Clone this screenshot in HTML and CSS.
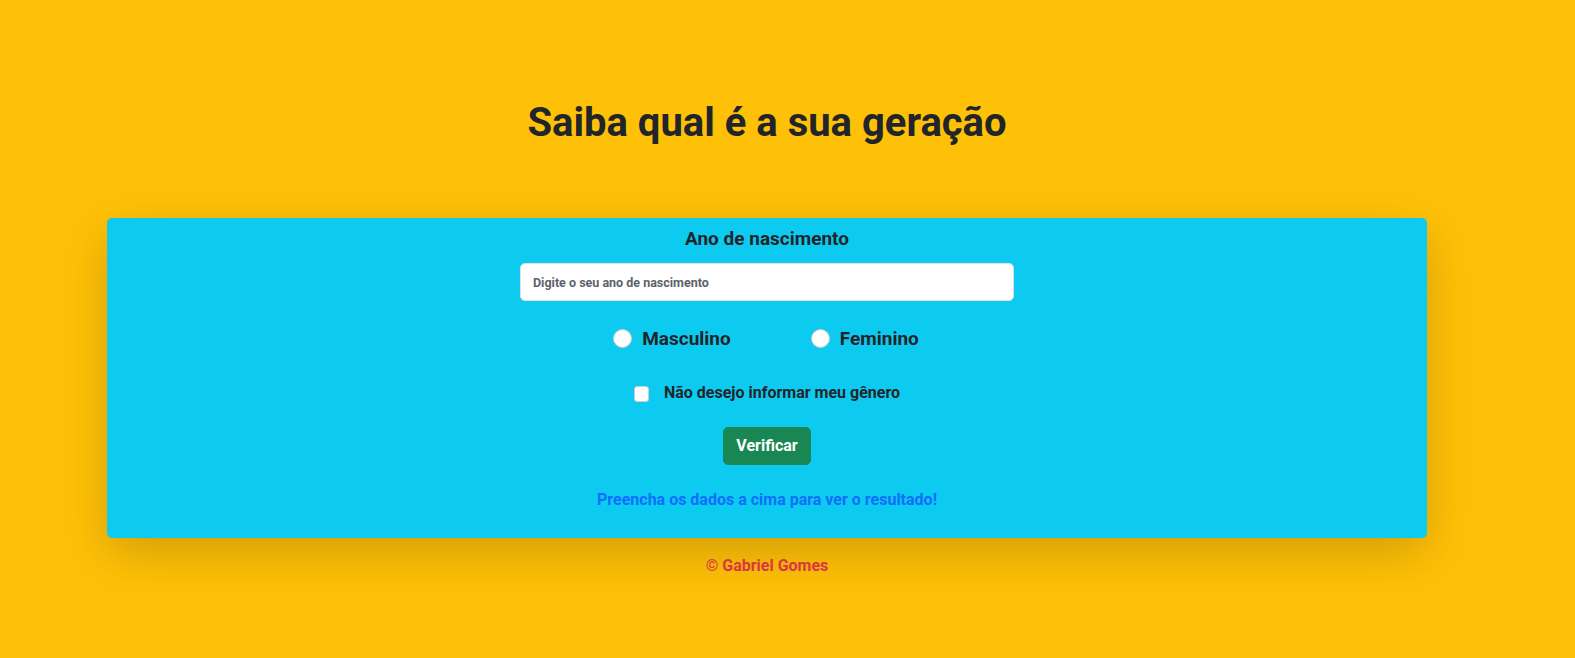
FILE: index.html
```html
<!DOCTYPE html>
<html lang="pt-br">
<head>
<meta charset="utf-8">
<title>Saiba qual é a sua geração</title>
<link rel="stylesheet" href="styles.css">
</head>
<body>
<div class="page">
  <h1 class="title">Saiba qual é a sua geração</h1>
  <main class="card">
    <label class="year-label" for="ano">Ano de nascimento</label>
    <input class="year-input" id="ano" type="text" placeholder="Digite o seu ano de nascimento">
    <div class="gender-row">
      <label class="radio-item"><span class="radio"></span><span>Masculino</span></label>
      <label class="radio-item"><span class="radio"></span><span>Feminino</span></label>
    </div>
    <div class="check-row">
      <span class="checkbox"></span>
      <span class="check-text">Não desejo informar meu gênero</span>
    </div>
    <button class="btn-verify" type="button">Verificar</button>
    <p class="result">Preencha os dados a cima para ver o resultado!</p>
  </main>
  <footer class="footer">© Gabriel Gomes</footer>
</div>
</body>
</html>
```

FILE: styles.css
```css
* { box-sizing: border-box; }
html, body { margin: 0; padding: 0; }
body {
  background: #ffc107;
  color: #212529;
  font-family: Roboto, "Liberation Sans", sans-serif;
  font-weight: 700;
  height: 658px;
}
.page {
  width: 1534px;
  display: flex;
  flex-direction: column;
  align-items: center;
}
.title {
  margin: 99px 0 0;
  font-size: 40px;
  line-height: 48px;
  font-weight: 700;
}
.card {
  margin-top: 71px;
  width: 1320px;
  background: #0dcaf0;
  border-radius: 5px;
  box-shadow: 0 16px 48px rgba(0,0,0,.175);
  display: flex;
  flex-direction: column;
  align-items: center;
  padding: 9px 0 26px;
}
.year-label {
  font-size: 19px;
  line-height: 24px;
}
.year-input {
  margin-top: 12px;
  width: 494px;
  height: 38px;
  border: 1px solid #dee2e6;
  border-radius: 5px;
  padding: 6px 12px;
  font-family: inherit;
  font-weight: 700;
  font-size: 12.5px;
  background: #fff;
}
.year-input::placeholder { color: #5c636a; opacity: 1; }
.gender-row {
  margin-top: 22px;
  height: 30px;
  display: flex;
  align-items: center;
  gap: 80px;
  padding-right: 2px;
}
.radio-item {
  display: flex;
  align-items: center;
  gap: 10px;
  font-size: 19px;
}
.radio {
  width: 19px;
  height: 19px;
  border-radius: 50%;
  background: #fff;
  border: 1px solid #c8cdd2;
}
.check-row {
  margin-top: 27px;
  display: flex;
  align-items: center;
  gap: 15px;
  font-size: 16px;
  height: 24px;
}
.checkbox {
  width: 15px;
  height: 16px;
  background: #fff;
  border: 1px solid #c8cdd2;
  border-radius: 3px;
  margin-top: 3px;
}
.btn-verify {
  margin-top: 23px;
  height: 38px;
  padding: 6px 12px;
  background: #198754;
  color: #fff;
  border: 1px solid #198754;
  border-radius: 5px;
  font-family: inherit;
  font-weight: 700;
  font-size: 16px;
  line-height: 24px;
}
.result {
  margin: 23px 0 0;
  color: #0d6efd;
  font-size: 16px;
  line-height: 24px;
}
.footer {
  margin-top: 16px;
  color: #dc3545;
  font-size: 16px;
  line-height: 24px;
}
```
